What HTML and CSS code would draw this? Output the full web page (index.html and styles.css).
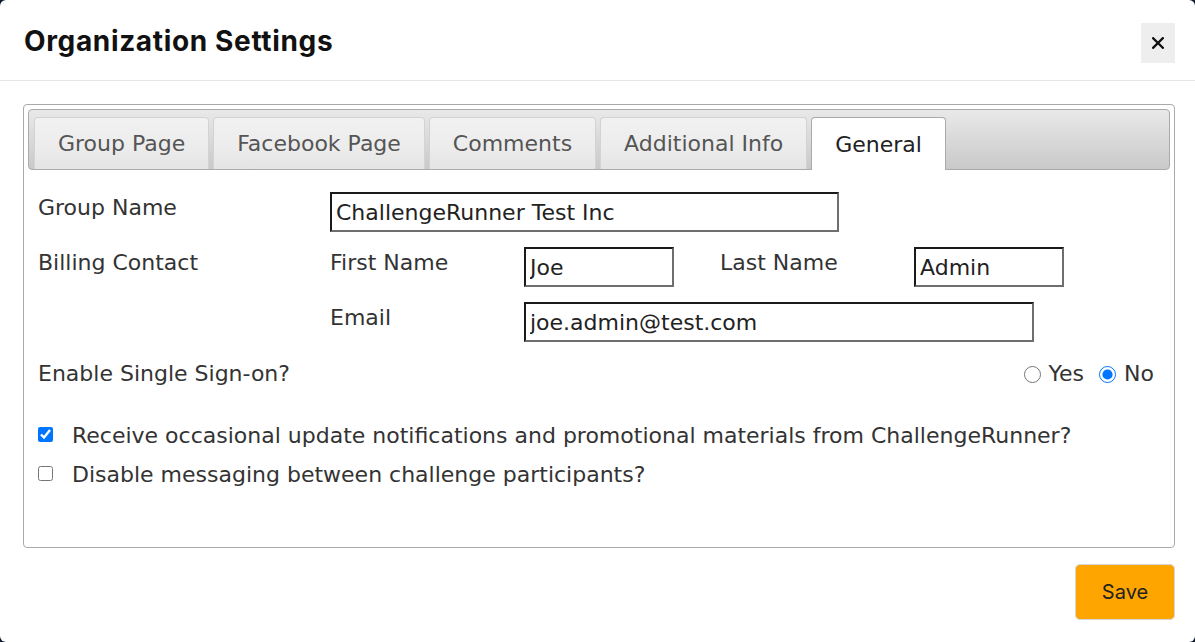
FILE: index.html
```html
<!DOCTYPE html>
<html lang="en">
<head>
<meta charset="utf-8">
<title>Organization Settings</title>
<link rel="stylesheet" href="styles.css">
</head>
<body>
<div class="modal">
  <div class="modal-header">
    <h1 class="modal-title">Organization Settings</h1>
    <button class="close-btn" type="button" aria-label="Close">
      <svg width="12" height="12" viewBox="0 0 12 12"><path d="M1.2 1.2 L10.8 10.8 M10.8 1.2 L1.2 10.8" stroke="#111" stroke-width="2.3" stroke-linecap="square" fill="none"/></svg>
    </button>
  </div>
  <div class="modal-body">
    <div class="panel">
      <ul class="tab-bar">
        <li class="tab">Group Page</li>
        <li class="tab">Facebook Page</li>
        <li class="tab">Comments</li>
        <li class="tab">Additional Info</li>
        <li class="tab tab-active">General</li>
      </ul>
      <div class="tab-content">
        <div class="form-grid">
          <div class="lbl">Group Name</div>
          <div class="span-wide"><input class="field field-group" type="text" value="ChallengeRunner Test Inc"></div>

          <div class="lbl">Billing Contact</div>
          <div class="lbl">First Name</div>
          <div><input class="field field-short" type="text" value="Joe"></div>
          <div class="lbl">Last Name</div>
          <div><input class="field field-short" type="text" value="Admin"></div>

          <div class="lbl"></div>
          <div class="lbl">Email</div>
          <div class="span-email"><input class="field field-email" type="text" value="joe.admin@test.com"></div>
        </div>

        <div class="sso-row">
          <div class="lbl-inline">Enable Single Sign-on?</div>
          <div class="radios">
            <label class="radio-opt"><input type="radio" name="sso" class="radio">Yes</label>
            <label class="radio-opt"><input type="radio" name="sso" class="radio" checked>No</label>
          </div>
        </div>

        <div class="checks">
          <label class="check-row"><input type="checkbox" class="check" checked>Receive occasional update notifications and promotional materials from ChallengeRunner?</label>
          <label class="check-row"><input type="checkbox" class="check">Disable messaging between challenge participants?</label>
        </div>
      </div>
    </div>
    <div class="modal-footer">
      <button class="save-btn" type="button">Save</button>
    </div>
  </div>
</div>
</body>
</html>
```
FILE: styles.css
```css
html, body {
  margin: 0;
  padding: 0;
}
body {
  background: #0f1b2b;
  width: 1195px;
  height: 642px;
  overflow: hidden;
  font-family: "DejaVu Sans", Verdana, sans-serif;
  color: #333;
}
.modal {
  width: 1195px;
  height: 642px;
  background: #fff;
  border-radius: 6px;
  box-sizing: border-box;
}
.modal-header {
  height: 81px;
  box-sizing: border-box;
  border-bottom: 1px solid #e5e5e5;
  display: flex;
  align-items: center;
  justify-content: space-between;
  padding: 0 20px 0 24px;
}
.modal-title {
  margin: 2px 0 0 0;
  font-family: Inter, "Open Sans", sans-serif;
  font-weight: 700;
  font-size: 28px;
  letter-spacing: 0.65px;
  color: #111;
}
.close-btn {
  width: 34px;
  height: 40px;
  margin-top: 6px;
  border: none;
  background: #eeeeee;
  padding: 0;
  display: flex;
  align-items: center;
  justify-content: center;
}
.modal-body {
  padding: 23px 20px 0 23px;
}
.panel {
  height: 444px;
  box-sizing: border-box;
  border: 1px solid #aaaaaa;
  border-radius: 4px;
  padding: 4px;
}
.tab-bar {
  list-style: none;
  margin: 0;
  padding: 7px 5px 0 5px;
  height: 61px;
  box-sizing: border-box;
  border: 1px solid #aaaaaa;
  border-radius: 4px;
  background: linear-gradient(#e9e9e9, #c9c9c9);
  display: flex;
  align-items: flex-start;
}
.tab {
  height: 52px;
  box-sizing: border-box;
  padding: 0 23px;
  margin-right: 4px;
  border: 1px solid #d3d3d3;
  border-bottom: none;
  border-radius: 4px 4px 0 0;
  background: linear-gradient(#f1f1f1 0%, #ececec 60%, #e4e4e4 100%);
  color: #555;
  font-size: 22px;
  display: flex;
  align-items: center;
}
.tab-active {
  height: 53px;
  margin-bottom: -1px;
  background: #fff;
  border-color: #aaaaaa;
  color: #222;
}
.tab-content {
  padding: 22px 16px 0 10px;
}
.form-grid {
  display: grid;
  grid-template-columns: 292px 194px 196px 194px 1fr;
  row-gap: 15px;
  align-items: start;
}
.lbl {
  font-size: 22px;
  line-height: 26px;
  padding-top: 3px;
  color: #333;
}
.span-wide {
  grid-column: 2 / 6;
}
.span-email {
  grid-column: 3 / 6;
}
.field {
  display: block;
  box-sizing: border-box;
  height: 40px;
  padding: 0 4px;
  margin: 0;
  font-family: "DejaVu Sans", Verdana, sans-serif;
  font-size: 22px;
  color: #222;
  background: #fff;
  border-style: solid;
  border-width: 2px;
  border-top-color: #1a1a1a;
  border-left-color: #1a1a1a;
  border-right-color: #6e6e6e;
  border-bottom-color: #6e6e6e;
  outline: none;
}
.field-group { width: 509px; }
.field-short { width: 150px; }
.field-email { width: 510px; }
.sso-row {
  margin-top: 16px;
  padding-top: 3px;
  display: flex;
  justify-content: space-between;
  align-items: center;
  font-size: 22px;
  line-height: 26px;
}
.radios {
  display: flex;
  align-items: center;
}
.radio-opt {
  display: flex;
  align-items: center;
  margin-left: 15px;
}
.radio {
  width: 17px;
  height: 17px;
  margin: 0 8px 0 0;
}
.checks {
  margin-top: 36px;
  display: flex;
  flex-direction: column;
  gap: 13px;
}
.check-row {
  display: flex;
  align-items: center;
  font-size: 22px;
  line-height: 26px;
  color: #333;
}
.check {
  width: 15px;
  height: 15px;
  margin: 0 19px 4px 0;
}
.modal-footer {
  display: flex;
  justify-content: flex-end;
  padding-top: 16px;
}
.save-btn {
  width: 100px;
  height: 56px;
  background: #ffa500;
  border: 1px solid #d6d6d6;
  border-radius: 5px;
  font-family: Inter, "Open Sans", sans-serif;
  font-size: 20px;
  color: #222;
  padding: 0;
}
```
